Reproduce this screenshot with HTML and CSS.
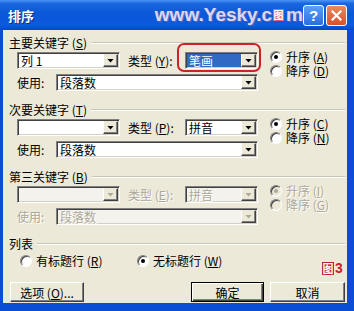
FILE: index.html
```html
<!DOCTYPE html>
<html lang="zh-CN">
<head>
<meta charset="UTF-8">
<title>排序</title>
<link rel="stylesheet" href="styles.css">
</head>
<body>
  <div class="window">
    <div class="titlebar">
      <span class="title">排序</span>
      <span class="watermark">www.Yesky.c<span class="wm-mark">图</span>m</span>
      <span class="tb-btn help-btn">?</span>
      <span class="tb-btn close-btn">
        <svg width="11" height="11" viewBox="0 0 11 11"><path d="M1.5 1.5 L9.5 9.5 M9.5 1.5 L1.5 9.5" stroke="#fff" stroke-width="2.2" stroke-linecap="square"/></svg>
      </span>
    </div>
    <div class="client">
      <!-- first key -->
      <div class="group">
        <div class="group-head"><span>主要关键字 (<u>S</u>)</span><span class="etch"></span></div>
        <div class="group-body">
          <div class="fields">
            <div class="row">
              <div class="combo combo-key"><span class="combo-text">列 1</span><span class="drop"></span></div>
              <span class="type-label">类型 (<u>Y</u>):</span>
              <span class="ring-wrap">
                <div class="combo combo-type"><span class="combo-text selected">笔画</span><span class="drop"></span></div>
              </span>
            </div>
            <div class="row row-use">
              <span class="use-label">使用:</span>
              <div class="combo combo-use"><span class="combo-text">段落数</span><span class="drop"></span></div>
            </div>
          </div>
          <div class="radios">
            <div class="radio-item"><span class="radio checked"></span>升序 (<u>A</u>)</div>
            <div class="radio-item"><span class="radio"></span>降序 (<u>D</u>)</div>
          </div>
        </div>
      </div>

      <!-- second key -->
      <div class="group">
        <div class="group-head"><span>次要关键字 (<u>T</u>)</span><span class="etch"></span></div>
        <div class="group-body">
          <div class="fields">
            <div class="row">
              <div class="combo combo-key"><span class="combo-text"></span><span class="drop"></span></div>
              <span class="type-label">类型 (<u>P</u>):</span>
              <div class="combo combo-type"><span class="combo-text">拼音</span><span class="drop"></span></div>
            </div>
            <div class="row row-use">
              <span class="use-label">使用:</span>
              <div class="combo combo-use"><span class="combo-text">段落数</span><span class="drop"></span></div>
            </div>
          </div>
          <div class="radios">
            <div class="radio-item"><span class="radio checked"></span>升序 (<u>C</u>)</div>
            <div class="radio-item"><span class="radio"></span>降序 (<u>N</u>)</div>
          </div>
        </div>
      </div>

      <!-- third key, disabled -->
      <div class="group disabled">
        <div class="group-head"><span>第三关键字 (<u>B</u>)</span><span class="etch"></span></div>
        <div class="group-body">
          <div class="fields">
            <div class="row">
              <div class="combo combo-key"><span class="combo-text"></span><span class="drop"></span></div>
              <span class="type-label">类型 (<u>E</u>):</span>
              <div class="combo combo-type"><span class="combo-text">拼音</span><span class="drop"></span></div>
            </div>
            <div class="row row-use">
              <span class="use-label">使用:</span>
              <div class="combo combo-use"><span class="combo-text">段落数</span><span class="drop"></span></div>
            </div>
          </div>
          <div class="radios">
            <div class="radio-item"><span class="radio checked"></span>升序 (<u>I</u>)</div>
            <div class="radio-item"><span class="radio"></span>降序 (<u>G</u>)</div>
          </div>
        </div>
      </div>

      <div class="group-head"><span>列表</span><span class="etch"></span></div>
      <div class="list-row">
        <div class="radio-item list-first"><span class="radio"></span>有标题行 (<u>R</u>)</div>
        <div class="radio-item"><span class="radio checked"></span>无标题行 (<u>W</u>)</div>
      </div>

      <div class="button-row">
        <button class="btn btn-options">选项 (<u>O</u>)...</button>
        <button class="btn btn-default">确定</button>
        <button class="btn btn-cancel">取消</button>
      </div>

      <div class="fig-label"><span class="fig-box">图</span>3</div>
    </div>
  </div>
</body>
</html>
```

FILE: styles.css
```css
body {
  margin: 0;
  font-family: "Noto Sans CJK SC", "Liberation Sans", sans-serif;
  font-size: 12px;
  color: #000;
}
.window {
  width: 354px;
  height: 311px;
  background: #0a4ed6;
  display: flex;
  flex-direction: column;
}
.titlebar {
  height: 30px;
  box-sizing: border-box;
  display: flex;
  align-items: center;
  padding: 0 7px 0 8px;
  color: #fff;
  background: linear-gradient(to bottom, #4a96f5 0%, #1a66e0 12%, #0b58d8 45%, #0a5ade 85%, #0646c4 100%);
}
.title {
  font-weight: bold;
  font-size: 13px;
  text-shadow: 1px 1px 0 #0b2a7a;
}
.watermark {
  margin-left: auto;
  display: flex;
  align-items: center;
  font-family: "Liberation Sans", Arial, sans-serif;
  font-weight: bold;
  font-size: 19px;
  color: #d9d7f5;
  text-shadow: 0 0 1px #6070c0, 1px 1px 0 #5a66b0;
}
.wm-mark {
  display: inline-block;
  width: 11px;
  height: 12px;
  margin: 0 2px 0 1px;
  background: #e05a86;
  color: #fff;
  font-family: "Noto Sans CJK SC", sans-serif;
  font-size: 10px;
  line-height: 12px;
  text-align: center;
  text-shadow: none;
}
.tb-btn {
  width: 21px;
  height: 21px;
  box-sizing: border-box;
  border: 1px solid #fff;
  border-radius: 3px;
  display: flex;
  align-items: center;
  justify-content: center;
}
.help-btn {
  background: linear-gradient(to bottom, #5aa0fa, #2a6ee0);
  color: #fff;
  font-family: "Liberation Sans", Arial, sans-serif;
  font-weight: bold;
  font-size: 15px;
}
.close-btn {
  margin-left: 2px;
  background: linear-gradient(to bottom, #ec8a5e, #d8502c);
}
.client {
  flex: 1;
  margin: 0 7px 8px 3px;
  background: #ece9d8;
  position: relative;
  padding-top: 6px;
}
.group {
  margin-bottom: 12px;
}
.group-head {
  height: 14px;
  line-height: 14px;
  display: flex;
  align-items: center;
  padding: 0 2px 0 6px;
}
.etch {
  flex: 1;
  margin-left: 4px;
  border-top: 1px solid #c8c5b4;
  border-bottom: 1px solid #fff;
}
.group-body {
  display: flex;
}
.fields {
  padding-left: 14px;
  padding-top: 2px;
}
.row {
  display: flex;
  align-items: center;
  height: 17px;
}
.row-use {
  margin-top: 5px;
}
.type-label {
  width: 57px;
  margin-left: 8px;
  white-space: nowrap;
}
.use-label {
  width: 39px;
}
.combo {
  height: 17px;
  box-sizing: border-box;
  display: flex;
  padding: 1px;
  background: #fff;
  border: 1px solid;
  border-color: #808080 #fff #fff #808080;
  box-shadow: inset 1px 1px 0 #404040, inset -1px -1px 0 #d4d0c8;
}
.combo-key { width: 103px; }
.combo-type { width: 73px; }
.combo-use { width: 202px; }
.combo-text {
  flex: 1;
  line-height: 13px;
  padding-left: 2px;
  white-space: nowrap;
}
.combo-text.selected {
  background: #316ac5;
  color: #fff;
}
.drop {
  width: 15px;
  height: 13px;
  box-sizing: border-box;
  background: #ece9d8;
  border: 1px solid;
  border-color: #ece9d8 #404040 #404040 #fff;
  box-shadow: inset -1px -1px 0 #808080;
  display: flex;
  align-items: center;
  justify-content: center;
}
.drop::after {
  content: "";
  width: 7px;
  height: 4px;
  background: #000;
  clip-path: polygon(0 0, 100% 0, 50% 100%);
}
.ring-wrap {
  position: relative;
  display: flex;
}
.ring-wrap::after {
  content: "";
  position: absolute;
  left: -8px;
  right: -3px;
  top: -9px;
  bottom: -3px;
  border: 2px solid #cc2229;
  border-radius: 7px;
}
.radios {
  margin-left: 12px;
}
.radio-item {
  height: 14px;
  line-height: 14px;
  display: flex;
  align-items: center;
  white-space: nowrap;
}
.radio {
  width: 12px;
  height: 12px;
  box-sizing: border-box;
  margin-right: 4px;
  border-radius: 50%;
  background: #fff;
  border: 1px solid;
  border-color: #808080 #fff #fff #808080;
  box-shadow: inset 1px 1px 0 #404040;
  position: relative;
}
.radio.checked::after {
  content: "";
  position: absolute;
  left: 3px;
  top: 3px;
  width: 4px;
  height: 4px;
  border-radius: 50%;
  background: #000;
}
.disabled .fields,
.disabled .radios {
  color: #aca899;
  text-shadow: 1px 1px 0 #fff;
}
.disabled .combo {
  background: #f3f2ec;
}
.disabled .drop::after {
  background: #aca899;
}
.disabled .radio {
  background: #ece9d8;
}
.disabled .radio.checked::after {
  background: #aca899;
}
.list-row {
  display: flex;
  margin-top: 3px;
  padding-left: 17px;
}
.list-first {
  width: 117px;
}
.button-row {
  display: flex;
  margin-top: 14px;
  padding: 0 2px 0 7px;
}
.btn {
  height: 20px;
  box-sizing: border-box;
  padding: 0;
  font-family: inherit;
  font-size: 12px;
  background: #ece9d8;
  border: 1px solid;
  border-color: #fff #404040 #404040 #fff;
  box-shadow: inset -1px -1px 0 #808080;
  border-radius: 0;
}
.btn-options {
  width: 74px;
}
.btn-default {
  width: 73px;
  margin-left: auto;
  border-color: #000;
  box-shadow: inset 1px 1px 0 #fff, inset -1px -1px 0 #404040, inset -2px -2px 0 #808080;
}
.btn-cancel {
  width: 75px;
  margin-left: 6px;
}
.fig-label {
  position: absolute;
  left: 319px;
  top: 231px;
  display: flex;
  align-items: center;
  color: #d0202a;
  font-family: "Liberation Sans", Arial, sans-serif;
  font-weight: bold;
  font-size: 14px;
  line-height: 14px;
}
.fig-box {
  width: 12px;
  height: 13px;
  margin-right: 1px;
  background: #b8222c;
  color: #fff;
  font-family: "Noto Sans CJK SC", sans-serif;
  font-size: 11px;
  line-height: 13px;
  text-align: center;
}
```
